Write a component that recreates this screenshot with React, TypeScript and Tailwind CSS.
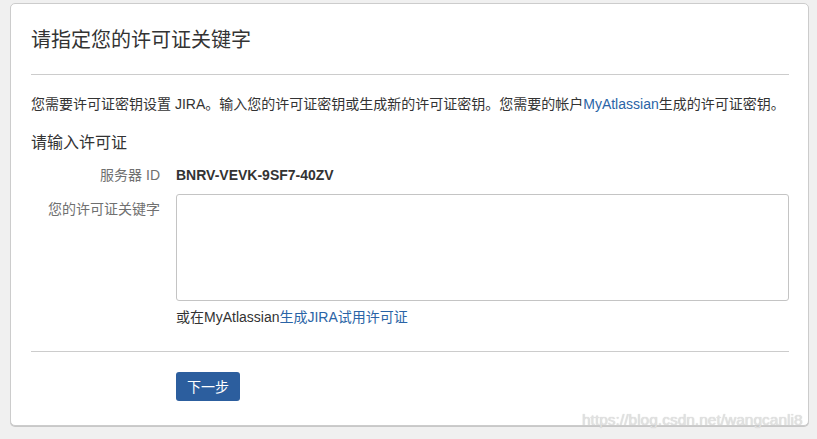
export default function App() {
  const font = { fontFamily: '"Liberation Sans", "Noto Sans CJK SC", sans-serif' };
  return (
    <div className="relative w-[817px] h-[439px] bg-[#f0f0f0] pt-[3px] pl-[10px] overflow-hidden" style={font}>
      <div className="w-[799px] h-[423px] bg-white border border-[#cccccc] rounded-[5px] shadow-[0_1px_0_#c8c8c8] pt-[21px] pl-[20px] pr-[19px] text-[#333333]">
        {/* 标题 */}
        <h1 className="text-[20px] leading-[30px] font-normal">请指定您的许可证关键字</h1>
        <div className="mt-[19px] h-px bg-[#cccccc]"></div>

        <p className="mt-[19px] text-[14px] leading-[20px]">
          您需要许可证密钥设置 JIRA。输入您的许可证密钥或生成新的许可证密钥。您需要的帐户
          <a className="text-[#2a64a6]">MyAtlassian</a>生成的许可证密钥。
        </p>

        <h2 className="mt-[17px] text-[16px] leading-[24px] font-normal">请输入许可证</h2>

        {/* 表单 */}
        <div className="mt-[10px] flex text-[14px] leading-[20px]">
          <div className="w-[129px] text-right text-[#707070]">服务器 ID</div>
          <div className="ml-[16px] font-bold text-[#333333]">BNRV-VEVK-9SF7-40ZV</div>
        </div>

        <div className="mt-[9px] flex text-[14px] leading-[20px]">
          <div className="w-[129px] pt-[5px] text-right text-[#707070]">您的许可证关键字</div>
          <div className="ml-[16px] flex-1">
            <textarea className="block w-full h-[107px] border border-[#c4c4c4] rounded-[3px] resize-none outline-none"></textarea>
            <div className="mt-[6px] text-[#333333]">
              或在MyAtlassian<a className="text-[#2a64a6]">生成JIRA试用许可证</a>
            </div>
          </div>
        </div>

        <div className="mt-[24px] h-px bg-[#cccccc]"></div>

        <div className="mt-[20px] pl-[145px]">
          <button className="h-[29px] px-[11px] rounded-[3px] bg-[#2c5e9e] text-white text-[14px] leading-[20px]">
            下一步
          </button>
        </div>
      </div>

      {/* 水印 */}
      <div
        className="absolute left-[582px] top-[410px] text-[15.5px] leading-[20px] text-[#e2e2e2] [text-shadow:0_0_1px_#c4c4c4] whitespace-nowrap"
        style={{ fontFamily: '"Liberation Sans", sans-serif' }}
      >
        https://blog.csdn.net/wangcanli8
      </div>
    </div>
  );
}
